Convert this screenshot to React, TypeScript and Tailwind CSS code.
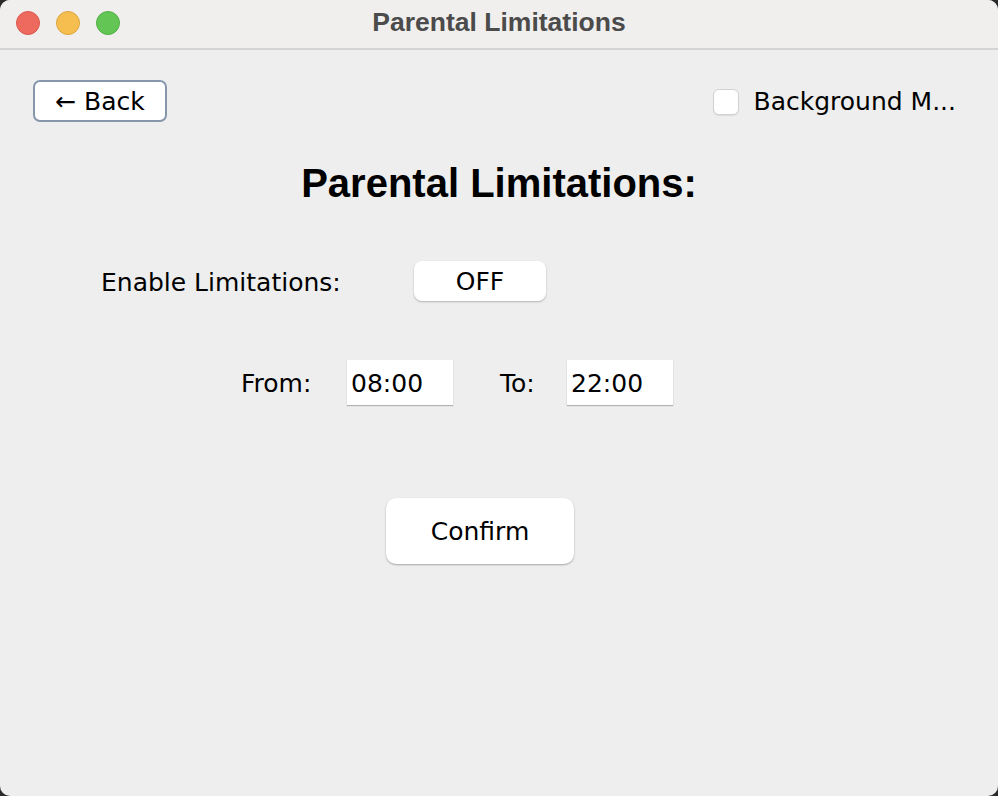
import { useState } from "react";

export default function App() {
  const [enabled, setEnabled] = useState(false);
  const [from, setFrom] = useState("08:00");
  const [to, setTo] = useState("22:00");
  const [bgMode, setBgMode] = useState(false);

  const ui = { fontFamily: '"DejaVu Sans", "Liberation Sans", sans-serif' };
  const arial = { fontFamily: '"Liberation Sans", Arial, sans-serif' };

  return (
    <div className="w-[998px] h-[796px] bg-[#2b2b2b]">
      <div className="w-full h-full rounded-[10px] overflow-hidden bg-[#eeeeee] flex flex-col" style={ui}>
        {/* TITLE BAR */}
        <div className="relative h-[50px] bg-[#f0efee] border-b-2 border-[#d4d4d4] flex items-center justify-center pb-[4px] shrink-0">
          <div className="absolute left-[16px] top-[11px] flex gap-[16px]">
            <span className="w-[24px] h-[24px] rounded-full bg-[#ee6a5f] border border-[#d9574d]" />
            <span className="w-[24px] h-[24px] rounded-full bg-[#f5be4f] border border-[#dca53c]" />
            <span className="w-[24px] h-[24px] rounded-full bg-[#62c554] border border-[#52ae45]" />
          </div>
          <span className="text-[#4b4b4b] text-[26.5px] font-bold leading-none" style={arial}>
            Parental Limitations
          </span>
        </div>

        {/* TOP ROW */}
        <div className="flex items-start justify-between pl-[33px] pr-[42px] pt-[30px] h-[72px] shrink-0">
          <button className="w-[134px] h-[42px] rounded-[7px] border-2 border-[#8797ab] bg-white text-[25px] leading-none text-black flex items-center justify-center">
            ← Back
          </button>
          <label className="flex items-center gap-[14px] mt-[9px] text-[25px] leading-[26px] text-black">
            <span
              onClick={() => setBgMode(!bgMode)}
              className="w-[26px] h-[26px] rounded-[6px] bg-white border border-[#d2d2d2] shadow-[0_1px_1px_rgba(0,0,0,0.08)]"
            />
            Background M...
          </label>
        </div>

        {/* HEADING */}
        <h1 className="text-center text-[40px] font-bold text-black mt-[41px] leading-[40px]" style={arial}>
          Parental Limitations:
        </h1>

        {/* ENABLE */}
        <div className="flex items-center mt-[58px] pl-[101px] h-[40px]">
          <span className="text-[25px] leading-none text-black w-[313px] pt-[3px]">Enable Limitations:</span>
          <button
            onClick={() => setEnabled(!enabled)}
            className="w-[132px] h-[40px] rounded-[8px] bg-white text-[25px] leading-none text-black shadow-[0_1px_2px_rgba(0,0,0,0.25)]"
          >
            {enabled ? "ON" : "OFF"}
          </button>
        </div>

        {/* TIME RANGE */}
        <div className="flex items-center mt-[59px] pl-[241px] h-[45px] text-[25px] leading-none text-black">
          <span className="w-[106px] pt-[2px]">From:</span>
          <input
            value={from}
            onChange={(e) => setFrom(e.target.value)}
            className="w-[106px] h-[45px] bg-white px-[4px] pt-[2px] outline-none shadow-[0_1px_1px_rgba(0,0,0,0.25)]"
          />
          <span className="ml-[47px] w-[67px] pt-[2px]">To:</span>
          <input
            value={to}
            onChange={(e) => setTo(e.target.value)}
            className="w-[106px] h-[45px] bg-white px-[4px] pt-[2px] outline-none shadow-[0_1px_1px_rgba(0,0,0,0.25)]"
          />
        </div>

        {/* ACTION */}
        <div className="flex justify-center mt-[93px] pr-[38px]">
          <button className="w-[188px] h-[66px] rounded-[10px] bg-white text-[25px] leading-none text-black shadow-[0_1px_2px_rgba(0,0,0,0.3)]">
            Confirm
          </button>
        </div>
      </div>
    </div>
  );
}
